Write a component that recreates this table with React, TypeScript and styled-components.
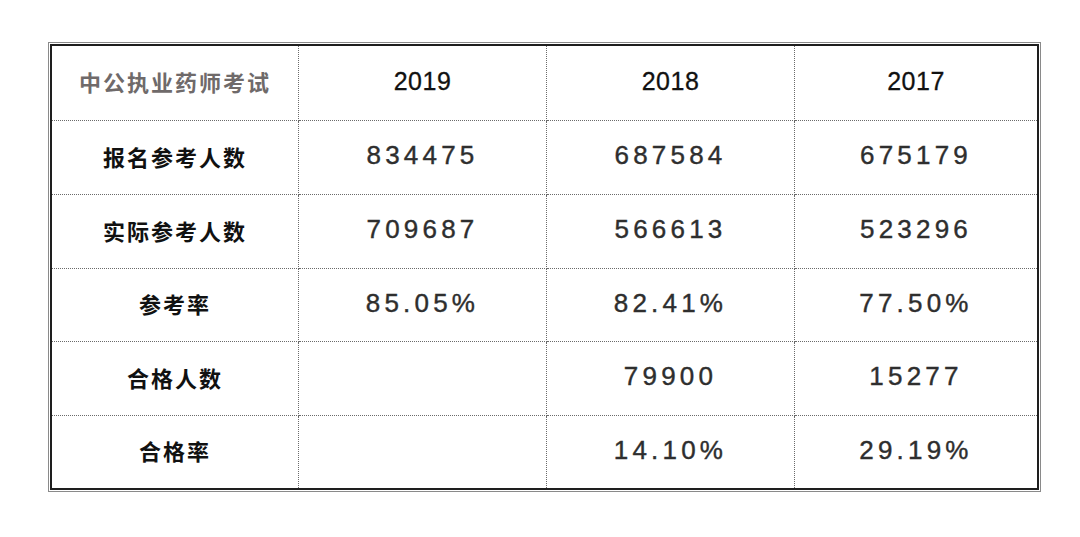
import React from 'react'
import styled, { createGlobalStyle } from 'styled-components'

const GlobalStyle = createGlobalStyle`
    html, body {
        margin: 0;
        padding: 0;
        background: #ffffff;
    }
    body {
        font-family: "Liberation Sans", "Noto Sans CJK SC", sans-serif;
    }
`;

const Page = styled.div`
    width: 1080px;
    height: 537px;
    padding: 42px 0 0 48px;
    box-sizing: border-box;
`;

// double outer border: thin grey line, a gap, then a thick dark line
const Frame = styled.div`
    width: 993px;
    height: 450px;
    box-sizing: border-box;
    border: 1px solid #8a8a8a;
    padding: 1px;
`;

const Grid = styled.div`
    height: 100%;
    box-sizing: border-box;
    border: 2px solid #1e1e1e;
    display: grid;
    grid-template-columns: 247px 248px 248px 1fr;
    grid-template-rows: 75px 74px 74px 73px 74px 72px;
`;

const Cell = styled.div<{ $lastCol?: boolean; $lastRow?: boolean }>`
    display: flex;
    align-items: center;
    justify-content: center;
    box-sizing: border-box;
    border-right: ${(p) => (p.$lastCol ? 'none' : '1px dotted #6a6a6a')};
    border-bottom: ${(p) => (p.$lastRow ? 'none' : '1px dotted #6a6a6a')};
`;

const Brand = styled.span`
    font-family: "Noto Sans CJK SC", sans-serif;
    font-weight: 700;
    font-size: 22px;
    letter-spacing: 2px;
    color: #6f6a6a;
    margin-bottom: 4px;
`;

const Year = styled.span`
    font-family: "Liberation Sans", sans-serif;
    font-size: 25px;
    letter-spacing: 0.5px;
    color: #111111;
    -webkit-text-stroke: 0.3px #111111;
    margin-bottom: 4px;
`;

const Label = styled.span`
    font-family: "Noto Sans CJK SC", sans-serif;
    font-weight: 700;
    font-size: 22px;
    letter-spacing: 2px;
    color: #111111;
    margin-bottom: 4px;
`;

const Value = styled.span`
    font-family: "Liberation Sans", sans-serif;
    font-size: 26px;
    letter-spacing: 4.2px;
    color: #2e2e2e;
    -webkit-text-stroke: 0.4px #2e2e2e;
    margin-bottom: 4px;
`;

const years = ['2019', '2018', '2017'];

const rows: { label: string; values: string[] }[] = [
    { label: '报名参考人数', values: ['834475', '687584', '675179'] },
    { label: '实际参考人数', values: ['709687', '566613', '523296'] },
    { label: '参考率', values: ['85.05%', '82.41%', '77.50%'] },
    { label: '合格人数', values: ['', '79900', '15277'] },
    { label: '合格率', values: ['', '14.10%', '29.19%'] },
];

export default function App() {
    return (
        <Page>
            <GlobalStyle />
            <Frame>
                <Grid>
                    <Cell><Brand>中公执业药师考试</Brand></Cell>
                    {years.map((y, i) => (
                        <Cell key={y} $lastCol={i === years.length - 1}>
                            <Year>{y}</Year>
                        </Cell>
                    ))}
                    {rows.map((row, r) => {
                        const last = r === rows.length - 1;
                        return (
                            <React.Fragment key={row.label}>
                                <Cell $lastRow={last}><Label>{row.label}</Label></Cell>
                                {row.values.map((v, i) => (
                                    <Cell key={i} $lastRow={last} $lastCol={i === row.values.length - 1}>
                                        <Value>{v}</Value>
                                    </Cell>
                                ))}
                            </React.Fragment>
                        );
                    })}
                </Grid>
            </Frame>
        </Page>
    );
}
